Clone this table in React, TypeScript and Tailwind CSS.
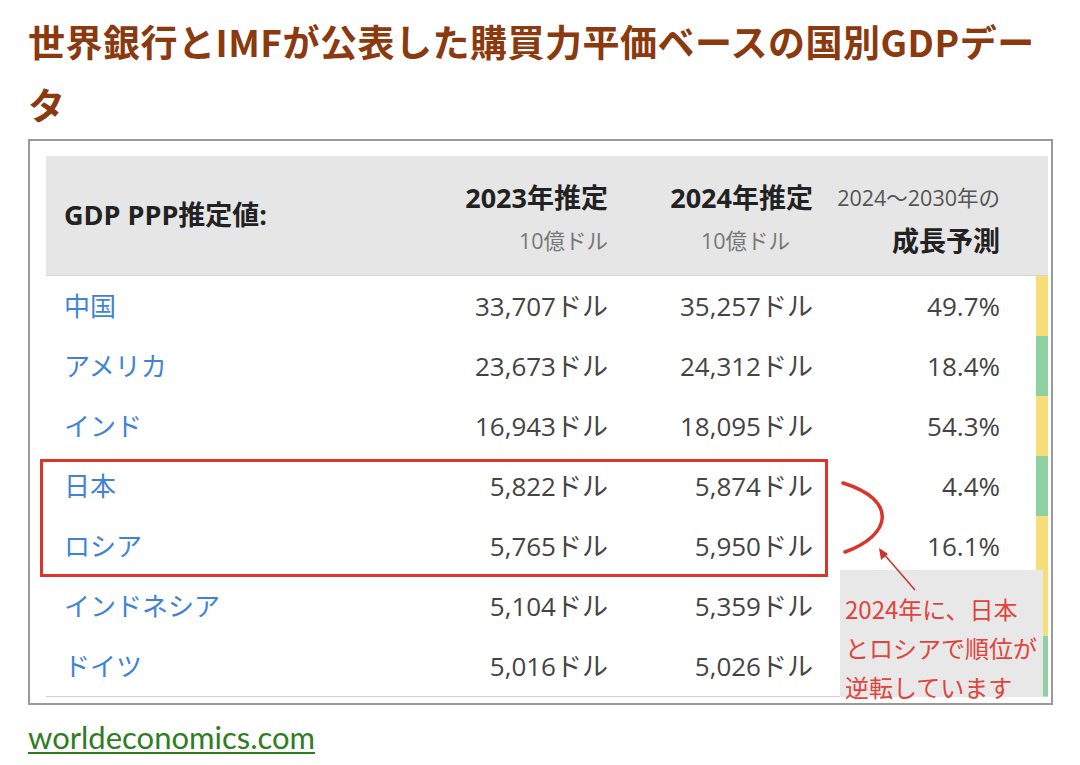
const rows = [
  { name: "中国", y23: "33,707", y24: "35,257", g: "49.7%", bar: "bg-[#f8de78]" },
  { name: "アメリカ", y23: "23,673", y24: "24,312", g: "18.4%", bar: "bg-[#90d1a4]" },
  { name: "インド", y23: "16,943", y24: "18,095", g: "54.3%", bar: "bg-[#f8de78]" },
  { name: "日本", y23: "5,822", y24: "5,874", g: "4.4%", bar: "bg-[#90d1a4]" },
  { name: "ロシア", y23: "5,765", y24: "5,950", g: "16.1%", bar: "bg-[#f8de78]" },
  { name: "インドネシア", y23: "5,104", y24: "5,359", g: "", bar: "bg-[#f8de78]" },
  { name: "ドイツ", y23: "5,016", y24: "5,026", g: "", bar: "bg-[#90d1a4]" },
];

const tableFont = "font-['Open_Sans','Noto_Sans_CJK_JP',sans-serif]";

export default function App() {
  return (
    <div className="w-[1080px] h-[765px] bg-white overflow-hidden">
      <h1 className="pl-[28px] pr-[20px] pt-[10px] text-[37px] leading-[63px] font-bold text-[#8a3a0e] font-['Noto_Sans_CJK_JP',sans-serif] tracking-[0.5px]">
        世界銀行とIMFが公表した購買力平価ベースの国別GDPデータ
      </h1>

      <div className={`relative ml-[28px] mt-[3px] w-[1025px] border-2 border-[#9a9a9a] pl-[16px] pr-[3px] pt-[15px] pb-[6px] ${tableFont}`}>
        {/* header */}
        <div className="flex h-[120px] bg-[#e6e6e6] border-b border-[#d4d4d4]">
          <div className="w-[362px] pl-[18px] flex items-center text-[27px] font-bold text-[#222]">
            GDP PPP推定値:
          </div>
          <div className="w-[200px] flex flex-col items-end pt-[24px]">
            <span className="text-[27px] leading-[36px] font-bold text-[#222] whitespace-nowrap">2023年推定</span>
            <span className="text-[21.5px] leading-[30px] mt-[10px] text-[#777]">10億ドル</span>
          </div>
          <div className="w-[205px] flex flex-col items-end pt-[24px]">
            <span className="text-[27px] leading-[36px] font-bold text-[#222] whitespace-nowrap">2024年推定</span>
            <span className="text-[21.5px] leading-[30px] mt-[10px] mr-[23px] text-[#777]">10億ドル</span>
          </div>
          <div className="w-[187px] flex flex-col items-end pt-[24px]">
            <span className="text-[21.5px] leading-[36px] text-[#555] whitespace-nowrap">2024〜2030年の</span>
            <span className="text-[27px] leading-[30px] mt-[10px] font-bold text-[#222]">成長予測</span>
          </div>
          <div className="w-[48px]" />
        </div>

        {/* rows */}
        {rows.map((r) => (
          <div key={r.name} className="flex h-[60px] items-center">
            <div className="w-[362px] pl-[18px] text-[26px] text-[#3f84d4]">{r.name}</div>
            <div className="w-[200px] text-right text-[26px] text-[#444] whitespace-nowrap">{r.y23}ドル</div>
            <div className="w-[205px] text-right text-[26px] text-[#444] whitespace-nowrap">{r.y24}ドル</div>
            <div className="w-[187px] text-right text-[26px] text-[#444]">{r.g}</div>
            <div className="w-[36px]" />
            <div className={`w-[12px] h-full ${r.bar}`} />
          </div>
        ))}
        <div className="h-[1px] bg-[#cfcfcf]" />

        {/* highlight box */}
        <div className="absolute left-[10px] top-[318px] w-[788px] h-[118px] border-[3px] border-[#d9352c]" />

        {/* note */}
        <div className="absolute left-[810px] top-[429px] w-[203px] h-[127px] bg-[#e8e8e8] pl-[5px] pt-[19px] text-[24px] leading-[39px] text-[#e0443c] font-['Noto_Sans_CJK_JP',sans-serif] whitespace-nowrap">
          <div>2024年に、日本</div>
          <div>とロシアで順位が</div>
          <div>逆転しています</div>
        </div>

        <svg className="absolute left-0 top-0 pointer-events-none" width="1021" height="560">
          <g transform="translate(-30,-141)">
            <path d="M843 483 C 898 500, 892 535, 845 552" fill="none" stroke="#d9352c" strokeWidth="3.5" strokeLinecap="round" />
            <line x1="915" y1="590" x2="883" y2="553" stroke="#c8362f" strokeWidth="1.6" />
            <path d="M879 548 L 881 560 L 888 554 Z" fill="#c8362f" />
          </g>
        </svg>
      </div>

      <div className="pl-[28px] mt-[14px]">
        <a href="#" className="text-[31px] leading-[36px] text-[#2f7d1f] underline decoration-2 underline-offset-[3px] font-['Lato',sans-serif]">
          worldeconomics.com
        </a>
      </div>
    </div>
  );
}
